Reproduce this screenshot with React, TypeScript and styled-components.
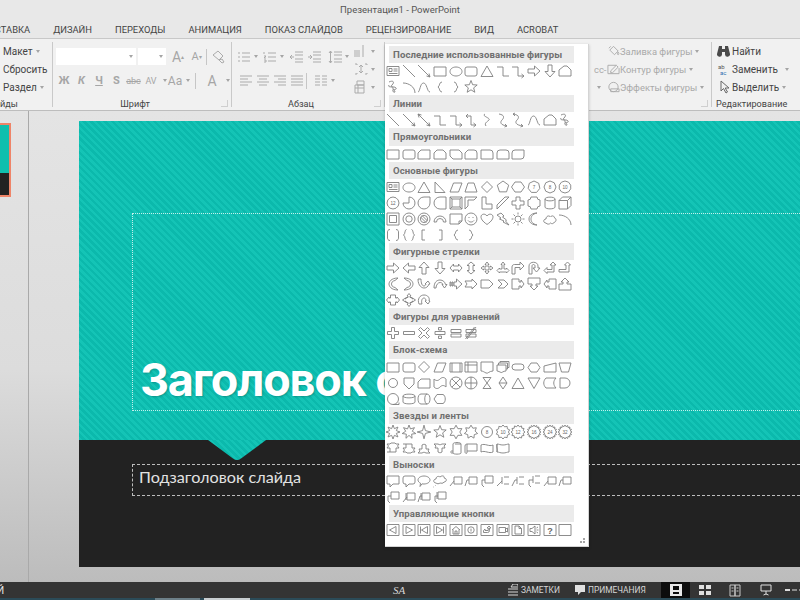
import React from "react"
import styled, { createGlobalStyle } from "styled-components"

const GlobalStyle = createGlobalStyle`
  html, body { margin: 0; padding: 0; width: 800px; height: 600px; overflow: hidden; }
  body { font-family: Roboto, "Open Sans", sans-serif; }
`

const Window = styled.div`
  position: relative;
  display: flex;
  flex-direction: column;
  width: 800px;
  height: 600px;
  overflow: hidden;
  background: #e8e8e8;
`

const TitleBar = styled.div`
  height: 20px;
  line-height: 19px;
  text-align: center;
  font-size: 9.5px;
  color: #555;
`

const Tabs = styled.div`
  display: flex;
  gap: 23px;
  height: 18px;
  margin-left: -11px;
  align-items: center;
  font-size: 9.4px;
  color: #444;
  white-space: nowrap;
`

const Ribbon = styled.div`
  display: flex;
  height: 73px;
  box-sizing: border-box;
  padding-top: 3px;
  background: #f1f1f1;
  border-top: 1px solid #c8c8c8;
  border-bottom: 1px solid #bdbdbd;
`

const Group = styled.div<{ $w: number }>`
  position: relative;
  display: flex;
  flex-direction: column;
  flex: none;
  width: ${(p) => p.$w}px;
  box-sizing: border-box;
  border-right: 1px solid #c9c9c9;
  margin-bottom: 3px;
`

const EditGroup = styled(Group)`
  border-right: none;
  padding-left: 4px;
`

const GroupBody = styled.div<{ $end?: boolean }>`
  flex: 1;
  display: flex;
  min-height: 0;
  justify-content: ${(p) => (p.$end ? "flex-end" : "flex-start")};
`

const GroupLabel = styled.div`
  height: 12px;
  line-height: 12px;
  margin-bottom: -3px;
  padding-right: 14px;
  text-align: center;
  font-size: 9.1px;
  color: #444;
  white-space: nowrap;
`

const ClippedLabel = styled(GroupLabel)`
  padding-right: 0;
  text-align: left;
  margin-left: -16px;
`

const PlainLabel = styled(GroupLabel)`
  padding-right: 0;
  text-align: left;
`

const Launcher = styled.span`
  position: absolute;
  right: 3px;
  bottom: 0;
  width: 6px;
  height: 6px;
  border: 1px solid #cfcfcf;
  border-width: 0 1px 1px 0;
`

const Stack = styled.div<{ $w?: number }>`
  display: flex;
  flex: none;
  flex-direction: column;
  width: ${(p) => (p.$w ? `${p.$w}px` : "auto")};
`

const CmdRow = styled.div<{ $off?: boolean }>`
  display: flex;
  align-items: center;
  height: 18px;
  font-size: ${(p) => (p.$off ? 9.4 : 10)}px;
  white-space: nowrap;
  color: ${(p) => (p.$off ? "#a9a9a9" : "#444")};
`

const SlidesRow = styled(CmdRow)`
  padding-left: 3px;
`

const CmdIcon = styled.span`
  display: flex;
  justify-content: center;
  align-items: center;
  width: 13px;
  flex: none;
`

const EditIcon = styled(CmdIcon)`
  width: 15px;
  margin-right: 1px;
`

const Caret = styled.span<{ $ml?: number }>`
  display: inline-block;
  flex: none;
  width: 0;
  height: 0;
  margin-left: ${(p) => p.$ml ?? 3}px;
  border-left: 2.5px solid transparent;
  border-right: 2.5px solid transparent;
  border-top: 3px solid #a5a5a5;
`

const ToolStack = styled.div<{ $w?: number }>`
  display: flex;
  flex: none;
  flex-direction: column;
  gap: 7px;
  padding-top: 6px;
  width: ${(p) => (p.$w ? `${p.$w}px` : "auto")};
`

const ToolRow = styled.div`
  display: flex;
  align-items: center;
  height: 17px;
  color: #a6a6a6;
`

const FontBox = styled.div<{ $w: number }>`
  display: flex;
  justify-content: flex-end;
  align-items: center;
  width: ${(p) => p.$w}px;
  height: 17px;
  margin-right: 2px;
  padding-right: 3px;
  box-sizing: border-box;
  background: #fff;
`

const Tool = styled.span<{ $w: number; $bold?: boolean; $italic?: boolean; $size?: number; $line?: string }>`
  display: flex;
  justify-content: center;
  align-items: center;
  flex: none;
  width: ${(p) => p.$w}px;
  font-size: ${(p) => p.$size ?? 11}px;
  font-weight: ${(p) => (p.$bold ? 700 : 400)};
  font-style: ${(p) => (p.$italic ? "italic" : "normal")};
  text-decoration: ${(p) => p.$line ?? "none"};
  white-space: nowrap;
`

const Mark = styled.sup`
  font-size: 6px;
  line-height: 0;
`

const Divider = styled.span<{ $mx: number }>`
  flex: none;
  width: 1px;
  height: 16px;
  margin: 0 ${(p) => p.$mx}px;
  background: #c6c6c6;
`

const SlideArea = styled.div`
  flex: 1;
  display: flex;
  min-height: 0;
  background: linear-gradient(#e4e4e4, #dcdcdc 55%, #bcbcbc);
`

const ThumbPane = styled.div`
  flex: none;
  width: 29px;
  box-sizing: border-box;
  padding-top: 12px;
  border-right: 1px solid #a9a9a9;
`

const Thumb = styled.div`
  width: 9px;
  height: 70px;
  border: 2px solid #ef8468;
  border-left: none;
  background: linear-gradient(#0fbfae 0 69%, #222 69%);
`

const Canvas = styled.div`
  flex: 1;
  min-width: 0;
  padding: 10px 0 15px 50px;
`

const Slide = styled.div`
  display: flex;
  flex-direction: column;
  height: 100%;
  overflow: hidden;
`

const stripes = `repeating-linear-gradient(45deg, #14c4b6 0 2.5px, #0bb9ac 2.5px 5px)`

const TealBand = styled.div`
  height: 319px;
  box-sizing: border-box;
  padding: 92px 0 29px 53px;
  background: ${stripes};
`

const TitleBox = styled.div`
  display: flex;
  align-items: flex-end;
  height: 198px;
  box-sizing: border-box;
  padding: 0 0 0 7px;
  border: 1px dotted rgba(255, 255, 255, 0.75);
  border-right: none;
`

const Title = styled.div`
  font-family: Inter, "Lato", sans-serif;
  font-weight: 700;
  font-size: 45px;
  letter-spacing: -1.2px;
  line-height: 60px;
  color: #fff;
  white-space: nowrap;
  text-shadow: 1px 1px 2px rgba(0, 0, 0, 0.2);
`

const DarkBand = styled.div`
  position: relative;
  flex: 1;
  box-sizing: border-box;
  padding: 24px 0 0 53px;
  background: #222;
`

const Notch = styled.div`
  position: absolute;
  top: 0;
  left: 129px;
  width: 58px;
  height: 21px;
  background: ${stripes};
  clip-path: path("M0 0 H58 L33 18.5 Q29 21.5 25 18.5 Z");
`

const SubtitleBox = styled.div`
  height: 32px;
  line-height: 24px;
  box-sizing: border-box;
  padding-left: 6px;
  border: 1px dashed rgba(255, 255, 255, 0.7);
  border-right: none;
  font-family: "Lato", "Open Sans", sans-serif;
  font-size: 16.2px;
  color: #e2e2e2;
`

const StatusBar = styled.div`
  display: flex;
  align-items: center;
  flex: none;
  height: 16px;
  background: #343434;
  color: #d6d6d6;
  font-size: 8.4px;
  white-space: nowrap;
`

const StatusEdge = styled.span`
  flex: none;
  width: 6px;
  margin-left: -3px;
  font-size: 10px;
  color: #e8e8e8;
`

const Signature = styled.span`
  flex: none;
  margin-left: 390px;
  width: 115px;
  font-family: "Liberation Serif", serif;
  font-style: italic;
  font-size: 11px;
`

const StatusItem = styled.span<{ $w: number }>`
  display: flex;
  flex: none;
  align-items: center;
  gap: 3px;
  width: ${(p) => p.$w}px;
`

const ViewButton = styled.span<{ $active?: boolean; $w: number }>`
  display: flex;
  flex: none;
  justify-content: center;
  align-items: center;
  width: ${(p) => p.$w}px;
  height: 16px;
  background: ${(p) => (p.$active ? "#0c0c0c" : "transparent")};
`

const ZoomBar = styled.span`
  flex: none;
  width: 5px;
  height: 2px;
  margin-left: 2px;
  background: #ddd;
  box-shadow: 7px 0 0 #8b8b8b, 14px 0 0 #8b8b8b;
`

const TaskStrip = styled.div`
  flex: none;
  height: 2px;
  background: linear-gradient(
    to right,
    #2b4b58 0 155px,
    #6d8089 155px 200px,
    #2b4b58 200px 204px,
    #c8ced1 204px 250px,
    #2b4b58 250px
  );
`

const Menu = styled.div`
  position: absolute;
  left: 385px;
  top: 44px;
  width: 204px;
  height: 503px;
  box-sizing: border-box;
  padding-top: 2px;
  background: #fff;
  border: 1px solid #d4d4d4;
  border-width: 0 1px 1px 0;
  box-shadow: 0 1px 3px rgba(0, 0, 0, 0.2);
`

const SectionHead = styled.div`
  height: 17.22px;
  line-height: 17px;
  margin-left: 4px;
  width: 185px;
  padding-left: 4px;
  box-sizing: border-box;
  background: #ebebeb;
  font-size: 9.6px;
  font-weight: 700;
  letter-spacing: 0.1px;
  color: #707070;
  white-space: nowrap;
`

const ShapeGrid = styled.div`
  display: grid;
  grid-template-columns: repeat(12, 15.7px);
  grid-auto-rows: 16px;
`

const ShapeCell = styled.div`
  display: flex;
  justify-content: center;
  align-items: center;
`

const ShapeSvg = styled.svg`
  width: 14px;
  height: 14px;
  fill: none;
  stroke: #808080;
  stroke-width: 0.9;
  stroke-linejoin: round;
  overflow: visible;
`

const ShapeNumber = styled.text<{ $big?: boolean }>`
  font-family: "Liberation Sans", sans-serif;
  font-size: ${(p) => (p.$big ? 9 : 4.6)}px;
  font-weight: ${(p) => (p.$big ? 700 : 400)};
  stroke: none;
  fill: #666;
  text-anchor: middle;
`

const Grip = styled.div`
  position: absolute;
  right: 3px;
  bottom: 3px;
  width: 2px;
  height: 2px;
  background: #a5a5a5;
  box-shadow: -3px 0 0 #a5a5a5, 0 -3px 0 #a5a5a5;
`

const arrowHead = "M13 13l-3.5-1M13 13l-1-3.5"

const starPath = (n: number, r1: number, r2: number) => {
  let d = ""
  for (let i = 0; i < n * 2; i++) {
    const r = i % 2 ? r2 : r1
    const a = (Math.PI * i) / n - Math.PI / 2
    d += `${i ? "L" : "M"}${(7 + r * Math.cos(a)).toFixed(2)} ${(7 + r * Math.sin(a)).toFixed(2)}`
  }
  return d + "Z"
}

const polyPath = (n: number) => {
  let d = ""
  for (let i = 0; i < n; i++) {
    const a = (2 * Math.PI * i) / n - Math.PI / 2
    d += `${i ? "L" : "M"}${(7 + 6 * Math.cos(a)).toFixed(2)} ${(7 + 6 * Math.sin(a)).toFixed(2)}`
  }
  return d + "Z"
}

const circle = (r: number) => `M${7 - r} 7a${r} ${r} 0 1 0 ${r * 2} 0a${r} ${r} 0 1 0 ${-r * 2} 0Z`

const shapes: Record<string, string> = {
  textbox: "M1 2.5h12v9H1zM3 4.5h3v3H3zM7.5 5h4M7.5 7h4M3 9.5h8.5",
  line: "M1 1L13 13",
  arrow: "M1 1L13 13" + arrowHead,
  dbl: "M1 1L13 13" + arrowHead + "M1 1l3.5 1M1 1l1 3.5",
  rect: "M1 3h12v9H1z",
  oval: "M7 3c3.4 0 6 2 6 4.5S10.4 12 7 12 1 10 1 7.5 3.6 3 7 3z",
  round: "M3 3h8a2 2 0 012 2v5a2 2 0 01-2 2H3a2 2 0 01-2-2V5a2 2 0 012-2z",
  tri: "M7 2l6 10.5H1z",
  elbow: "M1 3h6v9h6",
  elbowArr: "M1 3h6v9h6M13 12l-2.5-2M13 12l-2.5 2",
  elbowDbl: "M2 3h5v9h5M12 12l-2.5-2M12 12l-2.5 2M2 3l2-2M2 3l2 2",
  curved: "M5 1c-4 2 6 4 4 6s-5 3-3 6",
  curvedArr: "M3 1c6 1 5 4 3 6s-2 5 5 6M11 13l-2-2M11 13l-2.5 1",
  curvedDbl: "M2 1c7 1 6 4 4 6s-2 5 6 6M12 13l-2-2M12 13l-2.5 1M2 1l2-1M2 1l2 2",
  arc: "M1 3c6 0 12 4 12 10",
  wave: "M1 12C3 12 3 3 6.500 3S10 12 13 12",
  freeform: "M1 12V6l5-4h3l4 4v6H1z",
  scribble: "M3 2c4-2 6 0 3 3s3 1 4 3-2 1-3 2 1 3 2 2-3-2-2-4-6 0-4-3",
  lbrace: "M9 2C6 2 7 6 5 7c2 1 1 5 4 5",
  rbrace: "M5 2c3 0 2 4 4 5-2 1-1 5-4 5",
  lbracket: "M8 2H5v10h3",
  rbracket: "M6 2h3v10H6",
  star5: starPath(5, 6.5, 2.8),
  rtri: "M2 2l10 10.500H2z",
  para: "M4.500 3H13L9.500 12H1z",
  trap: "M4 3h6l3 9H1z",
  diamond: "M7 1.500l5.500 5.500L7 12.500 1.500 7z",
  pent: polyPath(5),
  hex: "M4 2h6l3.500 5-3.500 5H4L.5 7z",
  pie: "M7 7V1a6 6 0 11-6 6z",
  chord: "M9.500 1.500A6 6 0 1 0 12.500 9.500z",
  tear: "M13 1v6a6 6 0 11-6-6z",
  half: "M7 1h6v12H7a6 6 0 010-12z",
  frame: "M1 1h12v12H1zM3.500 3.500v7h7v-7z",
  halfFrame: "M1 1h12l-3 3H4v6l-3 3z",
  lshape: "M2 1h4v7h6v5H2z",
  stripe: "M1 9L9 1h4L1 13z",
  plus: "M5 1h4v4h4v4H9v4H5V9H1V5h4z",
  plaque: "M4 1h6a3 3 0 003 3v6a3 3 0 00-3 3H4a3 3 0 00-3-3V4a3 3 0 003-3z",
  can: "M2 3c0-2.500 10-2.500 10 0v8c0 2.500-10 2.500-10 0zM2 3c0 2.500 10 2.500 10 0",
  cube: "M1 4.500L4.500 1H13v8.500L9.500 13H1zM1 4.500h8.500V13M9.500 4.500L13 1",
  bevel: "M1 1h12v12H1zM3 3h8v8H3zM1 1l2 2M13 1l-2 2M1 13l2-2M13 13l-2-2",
  donut: circle(6) + circle(3.2),
  no: circle(6) + circle(3.6) + "M3.500 5L9 10.500M5 3.500L10.500 9",
  blockArc: "M1 10a6 6 0 0112 0h-2.500a3.500 3.500 0 00-7 0z",
  fold: "M1 2h12v7l-3 3H1zM13 9h-3v3",
  smiley: circle(6) + "M4.500 5.500h1M8.500 5.500h1M4 8.500c1.500 2 4.500 2 6 0",
  heart: "M7 12.500C2 9 1 6.500 1 4.800 1 2 5 1 7 4c2-3 6-2 6 .8 0 1.700-1 4.200-6 7.700z",
  bolt: "M5 1l3 3-1.500 1 4 3-1 1 3.500 4-6-3 1-1-4.500-2 1.500-1L1 3z",
  sun: circle(3) + "M7 .5v2M7 11.500v2M.5 7h2M11.500 7h2M2.500 2.500l1.500 1.500M10 10l1.500 1.500M2.500 11.500L4 10M10 4l1.500-1.500",
  moon: "M10 1C5 2 4 5 4 7s1 5 6 6C6 13 2 11 2 7s4-6 8-6z",
  cloud: "M3 11c-3 0-3-4 0-4 0-3 3-4 4.500-2 1.500-2 4-1 4 1 2 0 2 4 0 4-1 2-3 2-4 1-1 1.500-3.500 1.500-4.500 0z",
  bracketPair: "M4 1.500C2 1.500 1.500 3 1.500 4v6c0 1 .5 2.500 2.500 2.500M10 1.500c2 0 2.500 1.500 2.500 2.500v6c0 1-.5 2.500-2.500 2.500",
  bracePair: "M4.500 1.500C2.500 1.500 3.500 6 1.500 7c2 1 1 5.500 3 5.500M9.500 1.500c2 0 1 4.500 3 5.500-2 1-1 5.500-3 5.500",
  aR: "M1 5h6.500V2L13 7l-5.500 5V9H1z",
  aL: "M13 5H6.500V2L1 7l5.500 5V9H13z",
  aU: "M5 13V6.500H2L7 1l5 5.500H9V13z",
  aD: "M5 1v6.500H2L7 13l5-5.500H9V1z",
  aLR: "M1 7l3.500-4v2h5V3L13 7l-3.500 4V9h-5v2z",
  aUD: "M7 1l4 3.500H9v5h2L7 13 3 9.500h2v-5H3z",
  aQuad: "M7 1l2 2.500H8V6h2.500V5L13 7l-2.500 2V8H8v2.500h1L7 13l-2-2.500h1V8H3.500v1L1 7l2.500-2v1H6V3.500H5z",
  aLRU: "M7 1l2 2.500H8V8h2.500V7L13 9.500 10.500 12v-1h-7v1L1 9.500 3.500 7v1H6V3.500H5z",
  aBent: "M1 13V6c0-1.500 1-2.500 2.500-2.500H9V1l4 4-4 4V6.500H4V13z",
  aU2: "M2 13V5c0-5 9-5 9 0v2h2l-3.500 4L6 7h2V5c0-2-3-2-3 0v8z",
  aLU: "M1 9.500L4 6.500v2h5V4H7l3-3 3 3h-2v7H4v1.500z",
  aBentUp: "M1 8.500h7V4H6.500L9.500 1l3 3H11v7H1z",
  cR: "M12 1C5 1 3 5 3 7s2 6 9 6l-3-2.500C6 10 5.500 8 5.500 7S6 4 9 3.500z",
  cL: "M2 1c7 0 9 4 9 6s-2 6-9 6l3-2.500C8 10 8.500 8 8.500 7S8 4 5 3.500z",
  cU: "M1 2c0 7 4 9 6 9s4-1 5-4h1l-2-3-3 3h1c-.5 1.500-1.500 2-2 2-2 0-3-3-3-7z",
  cD: "M1 11C1 5 4 3 7 3s5 2 5.500 4.500H14L11.500 11 9 7.500h1C9.500 6 8 5.500 7 5.500 5 5.500 3 8 3 11z",
  aStriped: "M1 5h1v4H1zM3 5h1v4H3zM5 5h2.500V2L13 7l-5.500 5V9H5z",
  aNotch: "M1 4h7V2l5 5-5 5V10H1l2-3z",
  pentagon: "M1 3h8l4 4-4 4H1z",
  chevron: "M2 3h6l4 4-4 4H2l4-4z",
  callR: "M1 2h7v3h2V3l3 4-3 4V9H8v3H1z",
  callD: "M1 1h12v6H9v2h2l-4 4-4-4h2V7H1z",
  callL: "M13 2H6v3H4V3L1 7l3 4V9h2v3h7z",
  callU: "M1 13h12V7H9V5h2L7 1 3 5h2v2H1z",
  callLR: "M4.500 2h5v3H11V4l2.500 3L11 10V9H9.500v3h-5V9H3v1L.5 7 3 4v1h1.500z",
  callQ: "M7 .5L9 3H8v1.500h2V6h.5V5l3 2-3 2V8H10v1.500H8V11h1l-2 2.500L5 11h1V9.500H4V8h-.5v1l-3-2 3-2v1H4V4.500h2V3H5z",
  circ: "M2 11c-2-5 1-9 5-9s6 3 5 6h1l-2 3-3-3h1c0-2-1-3-2-3-2 0-3 3-2 6z",
  eqPlus: "M5.500 1.500h3v4h4v3h-4v4h-3v-4h-4v-3h4z",
  eqMinus: "M1.500 5.500h11v3h-11z",
  eqMul: "M3.500 1.500L7 5l3.500-3.500 2 2L9 7l3.500 3.500-2 2L7 9l-3.500 3.500-2-2L5 7 1.500 3.500z",
  eqDiv: "M2 5.500h10v3H2zM5.500 1.500h3v2.500h-3zM5.500 10h3v2.500h-3z",
  eqEq: "M2 3.500h10v3H2zM2 8h10v3H2z",
  eqNe: "M2 3.500h10v3H2zM2 8h10v3H2zM3 13L12 1M1.500 13l9-12",
  predefined: "M1 3h12v9H1zM3 3v9M11 3v9",
  internal: "M1 2h12v10H1zM4 2v10M1 5h12",
  document: "M1 2h12v9c-4 0-5 3-7 2-2-1-3-2-5-2z",
  multidoc: "M1 5h9v6c-3 0-4 2-5 1.500S2 11 1 11zM2.500 5V3h9v6h-1.500M4 3V1.500h9v6h-1.500",
  terminator: "M4 4h6a3 3 0 010 6H4a3 3 0 010-6z",
  prep: "M4 3h6l3 4.500-3 4.500H4L1 7.500z",
  manualIn: "M1 6l12-3v9H1z",
  manualOp: "M1 3h12l-2.500 9h-7z",
  connector: circle(4.5),
  offpage: "M2 2h10v6l-5 5-5-5z",
  card: "M4 3h9v9H1V6z",
  snip2: "M4 3h6l3 3v6H1V6z",
  snipDiag: "M1 3h9l3 3v6H4l-3-3z",
  snipRound: "M4 3h6a3 3 0 013 3v6H1V6z",
  round1: "M1 3h9a3 3 0 013 3v6H1z",
  round2: "M4 3h6a3 3 0 013 3v6H1V6a3 3 0 013-3z",
  roundDiag: "M1 6a3 3 0 013-3h9v6a3 3 0 01-3 3H1z",
  tape: "M1 3c2 2 4 2 6 0s4-2 6 0v8c-2-2-4-2-6 0s-4 2-6 0z",
  sumj: circle(6) + "M2.800 2.800l8.400 8.400M11.200 2.800l-8.400 8.400",
  orj: circle(6) + "M7 1v12M1 7h12",
  collate: "M3 1.500h8L3 12.500h8z",
  sort: "M7 1l4 6-4 6-4-6zM3 7h8",
  extract: "M7 2l6 10.500H1z",
  merge: "M1 2h12L7 12.500z",
  stored: "M3 2h10c-3 3-3 7 0 10H3c-3-3-3-7 0-10z",
  delay: "M2 2h5a5 5 0 010 10H2z",
  seq: circle(5.5) + "M7 12.500h6v-2",
  disk: "M1 4c0-2.500 12-2.500 12 0v6c0 2.500-12 2.500-12 0zM1 4c0 2.500 12 2.500 12 0",
  direct: "M4 2h6c4 0 4 10 0 10H4C0 12 0 2 4 2zM10 2c-3 0-3 10 0 10",
  display: "M1 7l3-4.500h6c3 1 3 8 0 9H4z",
  p7: polyPath(7),
  p8: polyPath(8),
  exp1: starPath(8, 7, 3.6),
  exp2: starPath(7, 7, 3.4),
  star4: starPath(4, 6.8, 2),
  star6: starPath(6, 6.8, 3.8),
  star7: starPath(7, 6.8, 4.2),
  rUp: "M1 11h3V7H1l1.500-2L1 3h3l1-1h4l1 1h3l-1.500 2L13 7h-3v4H4",
  rDown: "M1 3h3v4H1l1.500 2L1 11h3l1 1h4l1-1h3l-1.500-2L13 7h-3V3H4",
  crUp: "M1 12l2-2-1-2h3V4c2-1 2-1 4 0v4h3l-1 2 2 2H9c-2-1-2-1-4 0z",
  crDown: "M1 3l2 2-1 2h3v4c2 1 2 1 4 0V7h3l-1-2 2-2H9c-2 1-2 1-4 0z",
  vScroll: "M4 3c0-2 8-2 8 0v9c0 1.500-8 1.500-8 0V3zM4 12H2.500c-1 0-1-2 0-2H4M12 3H6",
  hScroll: "M1 5c0-2 2-2 2-2h10v7H3v2c-1 1-2 0-2-1zM3 3v7",
  flag: "M1 4c4-2 8 2 12 0v7c-4 2-8-2-12 0z",
  dblFlag: "M1 3c2 0 3 1 6 1s4-1 6-1v8c-2 0-3 1-6 1s-4-1-6-1zM1 3c-1 3 1 5 0 8",
  bubRect: "M1 2h12v8H7l-3 3v-3H1z",
  bubRound: "M3 2h8a2 2 0 012 2v4a2 2 0 01-2 2H7l-3 3v-3H3a2 2 0 01-2-2V4a2 2 0 012-2z",
  bubOval: "M7 2c3.300 0 6 1.800 6 4s-2.700 4-6 4c-.8 0-1.500 0-2-.2L3 12.500l.5-3.300C2 8.500 1 7.300 1 6c0-2.200 2.700-4 6-4z",
  bubCloud: "M3 9c-3 0-3-4 0-4 0-3 3-3 4-2 2-2 5-1 4 1 3 0 3 4 0 4-1 2-3 1-4 1-1 1-3 1-4 0zM2 11.500h.5M.5 13H1",
  ln1: "M5 3h8v7H5zM5 7L1 12",
  ln2: "M5 3h8v7H5zM5 6H3l-2 6",
  ln3: "M5 2h8v7H5zM5 6H2v5l2 2",
  acc1: "M6 3v7M6 7L1 12M8 3h5M13 10H8",
  acc2: "M6 3v7M6 6H4l-3 6M8 3h5M13 10H8",
  acc3: "M6 2v7M6 6H2v5l2 2M8 2h5M13 9H8",
  bord1: "M5 3h8v7H5zM5 7L1 12M4 3v7",
  bord2: "M5 3h8v7H5zM5 6H3l-2 6M4 3v7",
  bord3: "M5 2h8v7H5zM5 6H2v5l2 2M4 2v7",
  act: "M1 1.500h12v11H1z",
}

// контуры внутри кнопок управления
const actionGlyphs: Record<string, string> = {
  back: "M10 3.500v7L3.500 7z",
  forward: "M4 3.500v7L10.500 7z",
  begin: "M3.500 3.500v7M10.500 3.500v7L4.500 7z",
  end: "M10.500 3.500v7M3.500 3.500v7L9.500 7z",
  home: "M3 7l4-3.500L11 7M4 6.500v4.500h6V6.500M6 11V8h2v3",
  info: circle(3.2) + "M7 6v2.500M7 5v.4",
  ret: "M3.500 7.500v2h4a2 2 0 002-2V5h1.500L9 3 7 5h1.300v2.500H5V6z",
  movie: "M3 4.500h6.500v5H3zM9.500 6L11.500 5v4L9.500 8z",
  doc: "M4 3h4l2.500 2.500V11H4zM8 3v2.500h2.500",
  sound: "M3 5.500h2L8 3v8L5 8.500H3zM9.500 5l1.500-1M9.500 7H11.500M9.500 9l1.500 1",
  blank: "",
}

const numbered: Record<string, number> = { p7: 7, p8: 8, p10: 10, p12: 12, s8: 8, s10: 10, s12: 12, s16: 16, s24: 24, s32: 32 }

const shapePath = (name: string): string => {
  if (shapes[name]) return shapes[name]
  if (name === "p10") return polyPath(10)
  if (name === "p12") return polyPath(12)
  if (name === "s8") return circle(5.5)
  const m = name.match(/^s(\d+)$/)
  if (m) return starPath(Math.min(+m[1], 16), 7, 5.4)
  return ""
}

function Shape({ name }: { name: string }) {
  const action = name.startsWith("act:") ? name.slice(4) : null
  return (
    <ShapeCell>
      <ShapeSvg viewBox="0 0 14 14">
        {action !== null ? (
          <>
            <path d={shapes.act} />
            {action === "help" ? (
              <ShapeNumber $big x="7" y="10.500">?</ShapeNumber>
            ) : (
              <path d={actionGlyphs[action]} />
            )}
          </>
        ) : (
          <path d={shapePath(name)} />
        )}
        {numbered[name] !== undefined && <ShapeNumber x="7" y="8.700">{numbered[name]}</ShapeNumber>}
      </ShapeSvg>
    </ShapeCell>
  )
}

const gallery: { title: string; items: string[] }[] = [
  {
    title: "Последние использованные фигуры",
    items: ["textbox", "line", "arrow", "rect", "oval", "round", "tri", "elbow", "elbowArr", "aR", "aD", "freeform", "scribble", "arc", "wave", "lbrace", "rbrace", "star5"],
  },
  {
    title: "Линии",
    items: ["line", "arrow", "dbl", "elbow", "elbowArr", "elbowDbl", "curved", "curvedArr", "curvedDbl", "wave", "freeform", "scribble"],
  },
  {
    title: "Прямоугольники",
    items: ["rect", "round", "card", "snip2", "snipDiag", "snipRound", "round1", "round2", "roundDiag"],
  },
  {
    title: "Основные фигуры",
    items: [
      "textbox", "oval", "tri", "rtri", "para", "trap", "diamond", "pent", "hex", "p7", "p8", "p10",
      "p12", "pie", "tear", "half", "bevel", "halfFrame", "lshape", "stripe", "plus", "plaque", "can", "cube",
      "frame", "donut", "no", "blockArc", "fold", "smiley", "heart", "bolt", "sun", "moon", "cloud", "arc",
      "bracketPair", "bracePair", "lbracket", "rbracket", "lbrace", "rbrace",
    ],
  },
  {
    title: "Фигурные стрелки",
    items: [
      "aR", "aL", "aU", "aD", "aLR", "aUD", "aQuad", "aLRU", "aBent", "aU2", "aLU", "aBentUp",
      "cR", "cL", "cU", "cD", "aStriped", "aNotch", "pentagon", "chevron", "callR", "callD", "callL", "callU",
      "callLR", "callQ", "circ",
    ],
  },
  {
    title: "Фигуры для уравнений",
    items: ["eqPlus", "eqMinus", "eqMul", "eqDiv", "eqEq", "eqNe"],
  },
  {
    title: "Блок-схема",
    items: [
      "rect", "round", "diamond", "para", "predefined", "internal", "document", "multidoc", "terminator", "prep", "manualIn", "manualOp",
      "connector", "offpage", "card", "tape", "sumj", "orj", "collate", "sort", "extract", "merge", "stored", "delay",
      "seq", "disk", "direct", "display",
    ],
  },
  {
    title: "Звезды и ленты",
    items: [
      "exp1", "exp2", "star4", "star5", "star6", "star7", "s8", "s10", "s12", "s16", "s24", "s32",
      "rUp", "rDown", "crUp", "crDown", "vScroll", "hScroll", "flag", "dblFlag",
    ],
  },
  {
    title: "Выноски",
    items: [
      "bubRect", "bubRound", "bubOval", "bubCloud", "ln1", "ln2", "ln3", "acc1", "acc2", "acc3", "ln1", "ln2",
      "ln3", "bord1", "bord2", "bord3",
    ],
  },
  {
    title: "Управляющие кнопки",
    items: ["act:back", "act:forward", "act:begin", "act:end", "act:home", "act:info", "act:ret", "act:movie", "act:doc", "act:sound", "act:help", "act:blank"],
  },
]

const tabs = ["ВСТАВКА", "ДИЗАЙН", "ПЕРЕХОДЫ", "АНИМАЦИЯ", "ПОКАЗ СЛАЙДОВ", "РЕЦЕНЗИРОВАНИЕ", "ВИД", "ACROBAT"]

// маленькие значки ленты
function Glyph({ d, w = 14, h = 14, color = "#ababab" }: { d: string; w?: number; h?: number; color?: string }) {
  return (
    <svg width={w} height={h} viewBox={`0 0 ${w} ${h}`} fill="none" stroke={color} strokeWidth="1">
      <path d={d} />
    </svg>
  )
}

const icons = {
  bullets: "M1 3h2M1 7h2M1 11h2M5 3h8M5 7h8M5 11h8",
  numbers: "M1 2v2M1 6h2l-2 2h2M1 10h2v2H1M5 3h8M5 7h8M5 11h8",
  outdent: "M5 2h8M5 5h8M5 9h8M5 12h8M4 7H0M0 7l2-2M0 7l2 2",
  indent: "M5 2h8M5 5h8M5 9h8M5 12h8M0 7h4M4 7L2 5M4 7L2 9",
  spacing: "M6 2h8M6 5h8M6 9h8M6 12h8M2.500 1v12M1 3l1.500-2L4 3M1 11l1.500 2L4 11",
  left: "M1 2h12M1 5h8M1 8h12M1 11h8",
  center: "M1 2h12M3 5h8M1 8h12M3 11h8",
  right: "M1 2h12M5 5h8M1 8h12M5 11h8",
  justify: "M1 2h12M1 5h12M1 8h12M1 11h12",
  columns: "M1 2h5M8 2h5M1 5h5M8 5h5M1 8h5M8 8h5M1 11h5M8 11h5",
  direction: "M1 6v7M3 6v7M5 6v7M9 1v12",
  vertical: "M1 2h2v1M11 2h2v1M1 12h2v-1M11 12h2v-1M7 3v8M5 5l2-2 2 2M5 9l2 2 2-2",
  smart: "M3 1h7v4H3zM1 5h9v8H1zM1 8h9M4 5v8",
  brush: "M2 5l5-4 5 5-4 4zM8 10l3 3 2-1-2-3z",
  fill: "M3 6l4-4 5 5-4 4zM2 4l2-2M12 8c1 1 1 3 0 3s-1-2 0-3z",
  pen: "M1 3h9M1 3v9h12V6M4 9l6-6 2 2-6 6H4z",
  effect: "M2 7a5 5 0 1010 0 5 5 0 00-10 0M4 9h9v3H4z",
}

function App() {
  return (
    <Window>
      <GlobalStyle />
      <TitleBar>Презентация1 - PowerPoint</TitleBar>
      <Tabs>
        {tabs.map((t) => (
          <span key={t}>{t}</span>
        ))}
      </Tabs>
      <Ribbon>
        <Group $w={53}>
          <GroupBody>
            <Stack>
              <SlidesRow>Макет<Caret /></SlidesRow>
              <SlidesRow>Сбросить</SlidesRow>
              <SlidesRow>Раздел<Caret /></SlidesRow>
            </Stack>
          </GroupBody>
          <ClippedLabel>Слайды</ClippedLabel>
        </Group>

        <Group $w={179}>
          <GroupBody>
            <ToolStack>
              <ToolRow>
                <Tool $w={3} />
                <FontBox $w={80}><Caret /></FontBox>
                <FontBox $w={28}><Caret /></FontBox>
                <Tool $w={20} $size={14}>A<Mark>▴</Mark></Tool>
                <Tool $w={17}>A<Mark>▾</Mark></Tool>
                <Divider $mx={1} />
                <Tool $w={19}><Glyph d={icons.brush} /></Tool>
              </ToolRow>
              <ToolRow>
                <Tool $w={2} />
                <Tool $w={18} $bold>Ж</Tool>
                <Tool $w={17} $bold $italic>К</Tool>
                <Tool $w={18} $bold $line="underline">Ч</Tool>
                <Tool $w={17} $bold>S</Tool>
                <Tool $w={17} $size={9} $line="line-through">abc</Tool>
                <Tool $w={18} $size={9}>AV</Tool>
                <Caret />
                <Tool $w={16} $size={12}>Aa</Tool>
                <Caret />
                <Divider $mx={5} />
                <Tool $w={22} $size={14}>A</Tool>
                <Caret />
              </ToolRow>
            </ToolStack>
          </GroupBody>
          <GroupLabel>Шрифт</GroupLabel>
          <Launcher />
        </Group>

        <Group $w={153}>
          <GroupBody>
            <ToolStack $w={122}>
              <ToolRow>
                <Tool $w={5} />
                <Tool $w={14}><Glyph d={icons.bullets} /></Tool>
                <Caret />
                <Tool $w={5} />
                <Tool $w={14}><Glyph d={icons.numbers} /></Tool>
                <Caret />
                <Tool $w={5} />
                <Tool $w={16}><Glyph d={icons.outdent} /></Tool>
                <Tool $w={2} />
                <Tool $w={16}><Glyph d={icons.indent} /></Tool>
                <Tool $w={4} />
                <Tool $w={15}><Glyph d={icons.spacing} /></Tool>
                <Caret />
              </ToolRow>
              <ToolRow>
                <Tool $w={5} />
                <Tool $w={17}><Glyph d={icons.left} /></Tool>
                <Tool $w={17}><Glyph d={icons.center} /></Tool>
                <Tool $w={17}><Glyph d={icons.right} /></Tool>
                <Tool $w={17}><Glyph d={icons.justify} /></Tool>
                <Divider $mx={1} />
                <Tool $w={6} />
                <Tool $w={14}><Glyph d={icons.columns} /></Tool>
                <Caret />
              </ToolRow>
            </ToolStack>
            <Stack>
              <CmdRow $off><Glyph d={icons.direction} /><Caret /></CmdRow>
              <CmdRow $off><Glyph d={icons.vertical} /><Caret /></CmdRow>
              <CmdRow $off><Glyph d={icons.smart} /><Caret /></CmdRow>
            </Stack>
          </GroupBody>
          <GroupLabel>Абзац</GroupLabel>
          <Launcher />
        </Group>

        <Group $w={327}>
          <GroupBody $end>
            <Stack>
              <CmdRow $off><CmdIcon /></CmdRow>
              <CmdRow $off>сс-</CmdRow>
              <CmdRow $off><Caret /></CmdRow>
            </Stack>
            <Stack $w={104}>
              <CmdRow $off><CmdIcon><Glyph d={icons.fill} /></CmdIcon>Заливка фигуры<Caret /></CmdRow>
              <CmdRow $off><CmdIcon><Glyph d={icons.pen} /></CmdIcon>Контур фигуры<Caret /></CmdRow>
              <CmdRow $off><CmdIcon><Glyph d={icons.effect} /></CmdIcon>Эффекты фигуры<Caret /></CmdRow>
            </Stack>
          </GroupBody>
          <Launcher />
        </Group>

        <EditGroup $w={88}>
          <GroupBody>
            <Stack>
              <CmdRow>
                <EditIcon>
                  <svg width="13" height="12" viewBox="0 0 13 12" fill="#4a4a4a">
                    <path d="M2 1h3v3h3V1h3l2 8a2.500 2.500 0 01-5 .5V7H5v2.500A2.500 2.500 0 010 9z" />
                  </svg>
                </EditIcon>
                Найти
              </CmdRow>
              <CmdRow>
                <EditIcon>
                  <svg width="13" height="13" viewBox="0 0 13 13">
                    <text x="1" y="5.500" fontSize="6" fill="#555" fontFamily="Roboto">ab</text>
                    <text x="3" y="12" fontSize="6" fill="#2c6fb0" fontFamily="Roboto">ac</text>
                  </svg>
                </EditIcon>
                Заменить<Caret $ml={7} />
              </CmdRow>
              <CmdRow>
                <EditIcon><Glyph d="M4 1v10l2.500-2.500L9 13l1.500-1-2.300-4H12z" color="#666" /></EditIcon>
                Выделить<Caret />
              </CmdRow>
            </Stack>
          </GroupBody>
          <PlainLabel>Редактирование</PlainLabel>
        </EditGroup>
      </Ribbon>

      <SlideArea>
        <ThumbPane>
          <Thumb />
        </ThumbPane>
        <Canvas>
          <Slide>
            <TealBand>
              <TitleBox>
                <Title>Заголовок слайда</Title>
              </TitleBox>
            </TealBand>
            <DarkBand>
              <Notch />
              <SubtitleBox>Подзаголовок слайда</SubtitleBox>
            </DarkBand>
          </Slide>
        </Canvas>
      </SlideArea>

      <StatusBar>
        <StatusEdge>Й</StatusEdge>
        <Signature>SA</Signature>
        <StatusItem $w={67}>
          <Glyph d="M5 0L3 3h8L9 0zM0 5h10M0 8h10M0 11h10" w={10} h={12} color="#d6d6d6" />
          ЗАМЕТКИ
        </StatusItem>
        <StatusItem $w={86}>
          <svg width="10" height="10" viewBox="0 0 10 10" fill="#e0e0e0"><path d="M0 0h10v7H6L3 10V7H0z" /></svg>
          ПРИМЕЧАНИЯ
        </StatusItem>
        <ViewButton $w={29} $active>
          <svg width="12" height="12" viewBox="0 0 12 12" fill="#e8e8e8"><path d="M0 0h12v12H0zM3 2v4h6V2zM3 8v2h6V8z" fillRule="evenodd" /></svg>
        </ViewButton>
        <ViewButton $w={30}>
          <svg width="12" height="10" viewBox="0 0 12 10" fill="#e0e0e0"><path d="M0 0h5v4H0zM7 0h5v4H7zM0 6h5v4H0zM7 6h5v4H7z" /></svg>
        </ViewButton>
        <ViewButton $w={29}>
          <Glyph d="M1 1h5v11H1zM6 1h5v11H6zM2.500 4h2M2.500 7h2M7.500 4h2M7.500 7h2" w={12} h={13} color="#c8c8c8" />
        </ViewButton>
        <ViewButton $w={34}>
          <Glyph d="M1 1h10v6H1zM6 7v3M3.500 11L6 10l2.500 1" w={12} h={12} color="#e0e0e0" />
        </ViewButton>
        <ZoomBar />
      </StatusBar>
      <TaskStrip />

      <Menu>
        {gallery.map((section) => (
          <div key={section.title}>
            <SectionHead>{section.title}</SectionHead>
            <ShapeGrid>
              {section.items.map((name, i) => (
                <Shape key={i} name={name} />
              ))}
            </ShapeGrid>
          </div>
        ))}
        <Grip />
      </Menu>
    </Window>
  )
}

export default App
